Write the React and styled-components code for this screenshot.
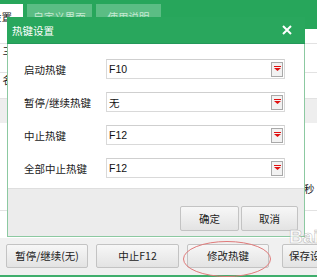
import React from 'react';
import styled, { createGlobalStyle } from 'styled-components';

const GlobalStyle = createGlobalStyle`
  body {
    margin: 0;
    font-family: "Noto Sans CJK SC", "Liberation Sans", sans-serif;
    background: #fff;
  }
`;

const Screen = styled.div`
  position: relative;
  width: 317px;
  height: 280px;
  overflow: hidden;
  display: flex;
  flex-direction: column;
  background: #fff;
  font-size: 10.5px;
  color: #222;
`;

// background window (mostly covered by the dialog)
const Header = styled.div`
  height: 29px;
  flex: none;
  background: #27a65b;
  display: flex;
  align-items: flex-end;
  gap: 4px;
  padding-top: 4px;
  box-sizing: border-box;
`;

const Tab = styled.div`
  height: 25px;
  width: ${({ width }) => width}px;
  display: flex;
  align-items: center;
  justify-content: ${({ active }) => (active ? 'flex-end' : 'center')};
  padding-right: ${({ active }) => (active ? 11 : 0)}px;
  overflow: hidden;
  white-space: nowrap;
  background: ${({ active }) => (active ? '#fff' : '#5bbd84')};
  color: ${({ active }) => (active ? '#222' : '#c4ead2')};
  padding-bottom: 1px;
  box-sizing: border-box;
`;

const Content = styled.div`
  flex: 1;
  display: flex;
  flex-direction: column;
  background: #fff;
`;

const Row = styled.div`
  height: ${({ h }) => h}px;
  flex: none;
  display: flex;
  align-items: center;
  justify-content: space-between;
  background: ${({ shade }) => (shade ? '#eeeeee' : 'transparent')};
  border-bottom: ${({ line }) => (line ? '1px solid #e2e2e2' : '0')};
  box-sizing: border-box;
`;

const EdgeText = styled.span`
  width: 13px;
  display: flex;
  justify-content: ${({ right }) => (right ? 'flex-start' : 'flex-end')};
  white-space: nowrap;
`;

const BottomBar = styled.div`
  height: 39px;
  flex: none;
  background: #f0f0f0;
  border-bottom: 2px solid #3fae6c;
  display: flex;
  align-items: center;
  padding: 0 0 2px 6px;
  gap: 8px;
  box-sizing: border-box;
`;

const Button = styled.div`
  width: ${({ w }) => w}px;
  height: ${({ h }) => h || 24}px;
  flex: none;
  margin-left: ${({ ml }) => ml || 0}px;
  display: flex;
  align-items: center;
  justify-content: ${({ start }) => (start ? 'flex-start' : 'center')};
  padding-left: ${({ start }) => (start ? 6 : 0)}px;
  box-sizing: border-box;
  border: 1px solid #c3c3c3;
  border-radius: 2px;
  background: linear-gradient(#f7f7f7, #e3e3e3);
  color: #222;
  white-space: nowrap;
`;

const Tail = styled.div`
  height: 3px;
  flex: none;
  background: #fff;
`;

// dialog
const Dialog = styled.div`
  position: absolute;
  left: 7px;
  top: 17px;
  width: 298px;
  height: 220px;
  display: flex;
  flex-direction: column;
  border: 1px solid #8cc9a1;
  box-sizing: border-box;
  background: #fff;
`;

const TitleBar = styled.div`
  height: 26px;
  flex: none;
  margin: -1px -1px 0;
  background: #29a75d;
  border-bottom: 1px solid #23985a;
  color: #fff;
  font-size: 10.5px;
  display: flex;
  align-items: center;
  justify-content: space-between;
  padding: 0 13px 0 5px;
`;

const Body = styled.div`
  flex: 1;
  display: flex;
  flex-direction: column;
  gap: 13px;
  padding: 15px 0 0 16px;
`;

const Field = styled.div`
  display: grid;
  grid-template-columns: 82px 179px;
  align-items: center;
  height: 20px;
`;

const Label = styled.span`
  color: #222;
`;

const Select = styled.div`
  height: 20px;
  box-sizing: border-box;
  border: 1px solid #d9d9d9;
  border-top-color: #cfcfcf;
  display: flex;
  align-items: center;
  justify-content: space-between;
  padding: 0 1px 0 2px;
  font-size: 10.5px;
  color: #111;
`;

const SelectText = styled.span`
  font-family: ${({ cjk }) =>
    cjk ? '"Noto Sans CJK SC", sans-serif' : '"Liberation Sans", sans-serif'};
`;

const DropButton = styled.div`
  width: 12px;
  height: 15px;
  box-sizing: border-box;
  border: 1px solid #a9a9a9;
  background: #f2f2f2;
  display: flex;
  align-items: flex-start;
  justify-content: center;
  padding-top: 3px;
`;

const Footer = styled.div`
  height: 42px;
  flex: none;
  background: #ececec;
  border-top: 1px solid #dedede;
  display: flex;
  align-items: flex-end;
  justify-content: flex-end;
  gap: 2px;
  padding: 0 6px 5px 0;
`;

const Ring = styled.svg`
  position: absolute;
  left: 182px;
  top: 240px;
`;

const Watermark = styled.div`
  position: absolute;
  left: 289px;
  top: 226px;
  font-family: "Liberation Sans", sans-serif;
  font-weight: bold;
  font-size: 19px;
  color: rgba(255, 255, 255, 0.75);
  -webkit-text-stroke: 0.6px rgba(150, 150, 150, 0.6);
`;

const Arrow = () => (
  <svg width="7" height="5" viewBox="0 0 7 5">
    <rect x="0" y="0" width="7" height="1" fill="#e01010" />
    <path d="M0 2 H7 L3.5 5 Z" fill="#e01010" />
  </svg>
);

const CloseIcon = () => (
  <svg width="10" height="10" viewBox="0 0 10 10">
    <path d="M1 1 L9 9 M9 1 L1 9" stroke="#fff" strokeWidth="2" />
  </svg>
);

const hotkeys = [
  { label: '启动热键', value: 'F10' },
  { label: '暂停/继续热键', value: '无', cjk: true },
  { label: '中止热键', value: 'F12' },
  { label: '全部中止热键', value: 'F12' },
];

export default function App() {
  return (
    <>
      <GlobalStyle />
      <Screen>
        <Header>
          <Tab active width={23}>设置</Tab>
          <Tab width={65}>自定义界面</Tab>
          <Tab width={65}>使用说明</Tab>
        </Header>
        <Content>
          <Row h={15} line />
          <Row h={12}>
            <EdgeText>三</EdgeText>
          </Row>
          <Row h={17} line />
          <Row h={13}>
            <EdgeText>名</EdgeText>
          </Row>
          <Row h={13} line />
          <Row h={24} shade />
          <Row h={55} />
          <Row h={20}>
            <span />
            <EdgeText right>秒</EdgeText>
          </Row>
          <Row h={13} line />
          <Row h={25} />
        </Content>
        <BottomBar>
          <Button w={82}>暂停/继续(无)</Button>
          <Button w={83}>中止F12</Button>
          <Button w={82}>修改热键</Button>
          <Button w={40} ml={5} start>保存设置</Button>
        </BottomBar>
        <Tail />

        <Dialog>
          <TitleBar>
            <span>热键设置</span>
            <CloseIcon />
          </TitleBar>
          <Body>
            {hotkeys.map(k => (
              <Field key={k.label}>
                <Label>{k.label}</Label>
                <Select>
                  <SelectText cjk={k.cjk}>{k.value}</SelectText>
                  <DropButton>
                    <Arrow />
                  </DropButton>
                </Select>
              </Field>
            ))}
          </Body>
          <Footer>
            <Button w={59} h={25}>确定</Button>
            <Button w={57} h={25}>取消</Button>
          </Footer>
        </Dialog>

        <Ring width="90" height="38" viewBox="0 0 90 38">
          <ellipse cx="45" cy="19" rx="43.5" ry="17.5" fill="none" stroke="#e07a7a" strokeWidth="1" />
        </Ring>
        <Watermark>Bai</Watermark>
      </Screen>
    </>
  );
}
